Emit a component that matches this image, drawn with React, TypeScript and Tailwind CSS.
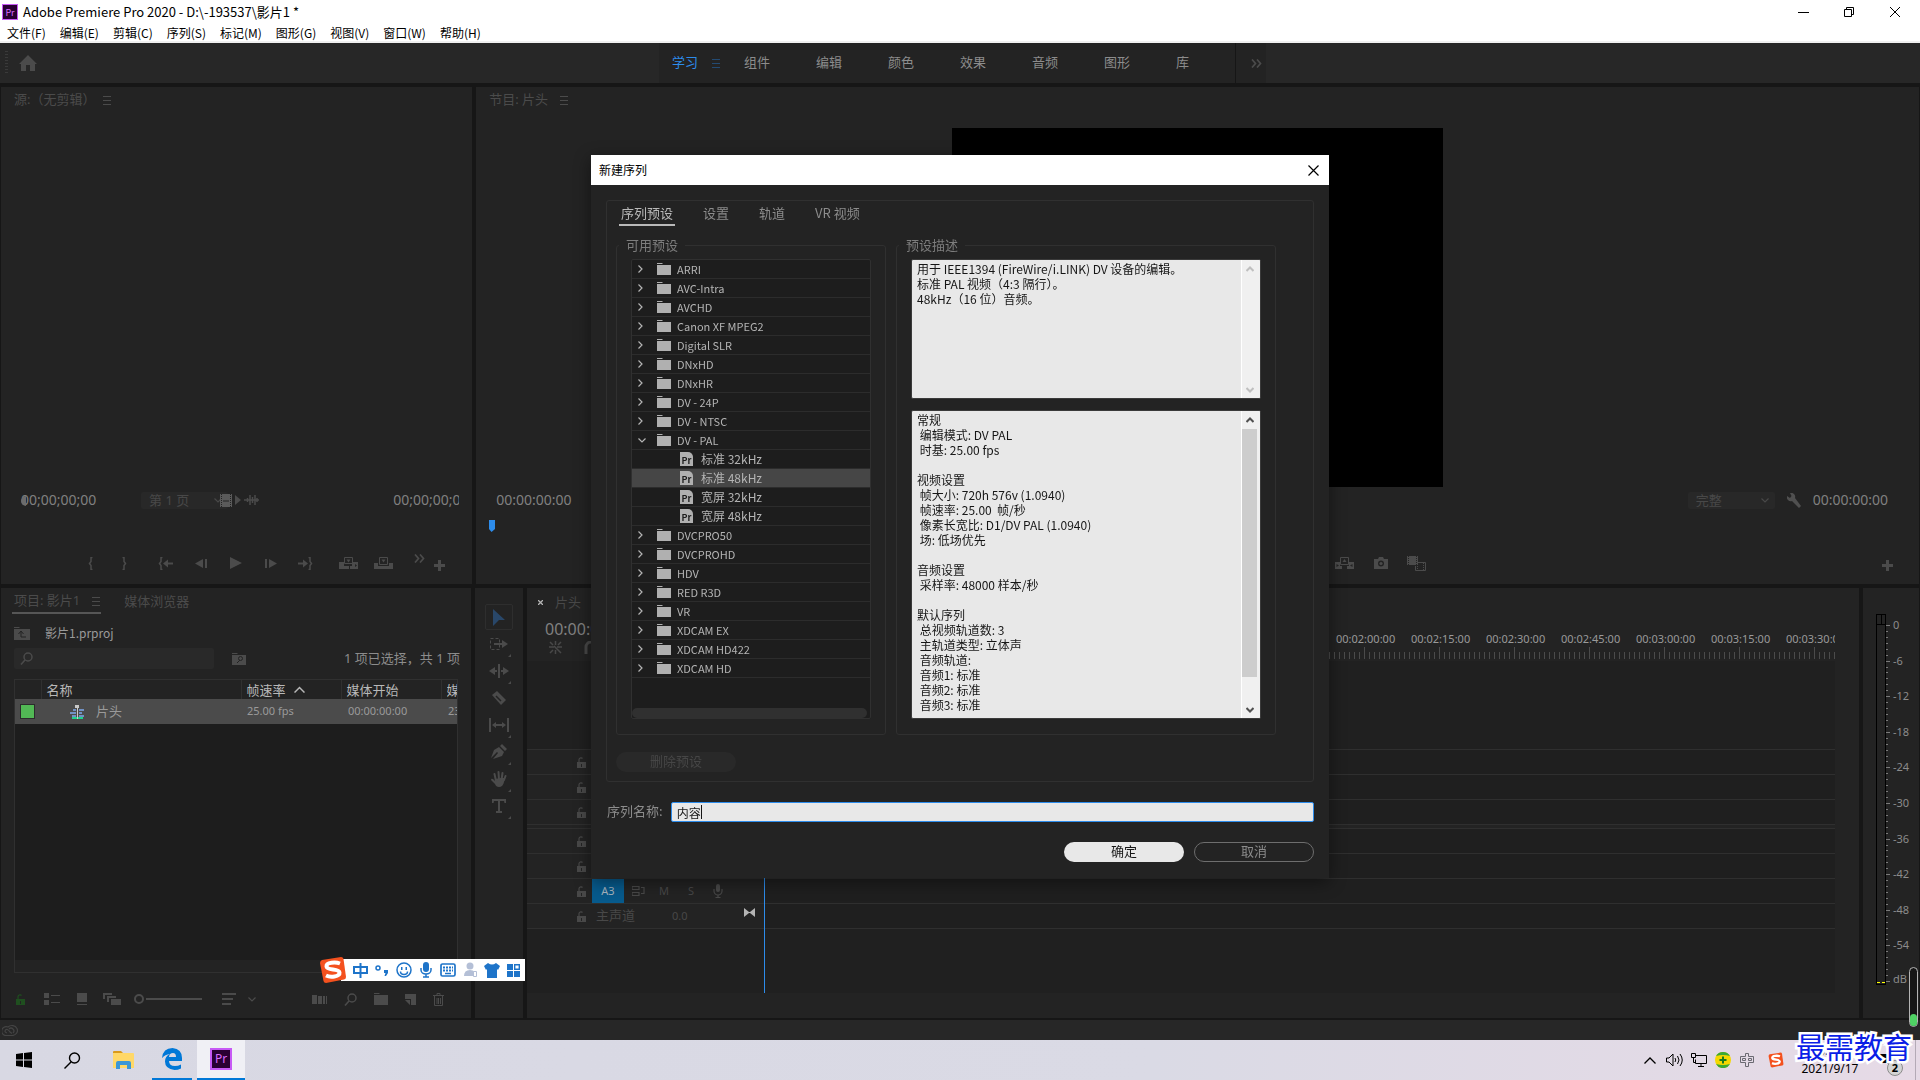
import { useState } from 'react'
import type { ReactNode } from 'react'
import clsx from 'clsx'

const menus = ['文件(F)', '编辑(E)', '剪辑(C)', '序列(S)', '标记(M)', '图形(G)', '视图(V)', '窗口(W)', '帮助(H)']
const workspaces = ['组件', '编辑', '颜色', '效果', '音频', '图形', '库']

type Preset = { name: string; open?: boolean; children?: string[] }

const presets: Preset[] = [
  { name: 'ARRI' },
  { name: 'AVC-Intra' },
  { name: 'AVCHD' },
  { name: 'Canon XF MPEG2' },
  { name: 'Digital SLR' },
  { name: 'DNxHD' },
  { name: 'DNxHR' },
  { name: 'DV - 24P' },
  { name: 'DV - NTSC' },
  { name: 'DV - PAL', open: true, children: ['标准 32kHz', '标准 48kHz', '宽屏 32kHz', '宽屏 48kHz'] },
  { name: 'DVCPRO50' },
  { name: 'DVCPROHD' },
  { name: 'HDV' },
  { name: 'RED R3D' },
  { name: 'VR' },
  { name: 'XDCAM EX' },
  { name: 'XDCAM HD422' },
  { name: 'XDCAM HD' },
]

const description = `用于 IEEE1394 (FireWire/i.LINK) DV 设备的编辑。
标准 PAL 视频（4:3 隔行）。
48kHz（16 位）音频。`

const details = `常规
 编辑模式: DV PAL
 时基: 25.00 fps

视频设置
 帧大小: 720h 576v (1.0940)
 帧速率: 25.00  帧/秒
 像素长宽比: D1/DV PAL (1.0940)
 场: 低场优先

音频设置
 采样率: 48000 样本/秒

默认序列
 总视频轨道数: 3
 主轨道类型: 立体声
 音频轨道:
 音频1: 标准
 音频2: 标准
 音频3: 标准`

/* ---------- icons ---------- */

type IconProps = { w?: number; h?: number; className?: string; children: ReactNode }

function Icon({ w = 16, h = 16, className, children }: IconProps) {
  return (
    <svg width={w} height={h} viewBox={`0 0 ${w} ${h}`} fill="currentColor" className={clsx('shrink-0', className)} aria-hidden="true">
      {children}
    </svg>
  )
}

const MenuLines = ({ className }: { className?: string }) => (
  <Icon w={8} h={9} className={className}>
    <path d="M0 0h8v1H0zM0 4h8v1H0zM0 8h8v1H0z" />
  </Icon>
)

const Folder = ({ className }: { className?: string }) => (
  <Icon w={14} h={12} className={className}>
    <path d="M0 0h5l1 1H0zM0 2h14v10H0z" />
  </Icon>
)

const Magnifier = ({ className }: { className?: string }) => (
  <Icon w={13} h={13} className={className}>
    <circle cx="8" cy="5" r="4" fill="none" stroke="currentColor" strokeWidth="1.5" />
    <path d="M5 8L1 12.5" stroke="currentColor" strokeWidth="1.6" />
  </Icon>
)

const Lock = ({ className }: { className?: string }) => (
  <Icon w={9} h={11} className={className}>
    <path fillRule="evenodd" d="M0 5h9v6H0zM4 7v3h1V7z" />
    <path d="M2 5V3a2 2 0 0 1 3.500-1.500" fill="none" stroke="currentColor" strokeWidth="1.200" />
  </Icon>
)

const Chevron = ({ className }: { className?: string }) => (
  <Icon w={8} h={5} className={className}>
    <path d="M.5.5L4 4 7.500.5" fill="none" stroke="currentColor" strokeWidth="1.200" />
  </Icon>
)

const Plus = () => (
  <Icon w={11} h={11}>
    <path d="M4 0h3v4h4v3H7v4H4V7H0V4h4z" />
  </Icon>
)

const Mic = ({ className }: { className?: string }) => (
  <Icon w={10} h={14} className={className}>
    <rect x="3" y="0" width="4" height="8" rx="2" />
    <path d="M1 5v2a4 4 0 0 0 8 0V5M5 11v2M2.500 13.500h5" fill="none" stroke="currentColor" strokeWidth="1.200" />
  </Icon>
)

const InIcon = () => (
  <Icon w={5} h={13}><path d="M4.500.5H3v4L1.500 6.500 3 8.500v4h1.500" fill="none" stroke="currentColor" strokeWidth="1.500" /></Icon>
)
const OutIcon = () => (
  <Icon w={5} h={13}><path d="M.5.5H2v4l1.500 2L2 8.500v4H.5" fill="none" stroke="currentColor" strokeWidth="1.500" /></Icon>
)
const GoInIcon = () => (
  <Icon w={15} h={13}>
    <path d="M4.500.5H3v4L1.500 6.500 3 8.500v4h1.500" fill="none" stroke="currentColor" strokeWidth="1.500" />
    <path d="M5 6.500L10 2.500v3h5v2h-5v3z" />
  </Icon>
)
const GoOutIcon = () => (
  <Icon w={15} h={13}>
    <path d="M10.500.5H12v4l1.500 2-1.500 2v4h-1.500" fill="none" stroke="currentColor" strokeWidth="1.500" />
    <path d="M10 6.500L5 2.500v3H0v2h5v3z" />
  </Icon>
)
const StepBackIcon = () => <Icon w={12} h={9}><path d="M0 4.500L8 0v9zM10 0h2v9h-2z" /></Icon>
const StepForwardIcon = () => <Icon w={12} h={9}><path d="M12 4.500L4 0v9zM0 0h2v9H0z" /></Icon>
const PlayIcon = () => <Icon w={12} h={12}><path d="M0 0l12 6-12 6z" /></Icon>
const InsertIcon = () => (
  <Icon w={19} h={12}>
    <path d="M0 5h5v4h5v3H0zM13 5h6v7h-8V9h2zM16 7v3l2-1.500z" fillRule="evenodd" />
    <path d="M5.500.5h8v6h-8z" fill="none" stroke="currentColor" />
    <path d="M7.500 2.500h4l-2 3z" />
  </Icon>
)
const OverwriteIcon = () => (
  <Icon w={19} h={12}>
    <path d="M0 6h4v3h11V6h4v6H0z" />
    <path d="M5.500.5h8v7h-8z" fill="none" stroke="currentColor" />
    <path d="M7.500 2.500h4l-2 3z" />
  </Icon>
)
const ExtractIcon = () => (
  <Icon w={19} h={12}>
    <path d="M0 5h5v4h2v3H0zM14 5h5v7h-7V9h2zM1.500 7v3L4 8.500zM17.500 7v3L15 8.500z" fillRule="evenodd" />
    <path d="M5.500.5h8v7h-8z" fill="none" stroke="currentColor" />
    <path d="M7.500 5h4l-2-3z" />
  </Icon>
)
const CameraIcon = () => (
  <Icon w={14} h={12}>
    <path fillRule="evenodd" d="M0 2h4l1-2h4l1 2h4v10H0zM7 3.500a3 3 0 1 0 0 6 3 3 0 0 0 0-6z" />
    <circle cx="7" cy="6.500" r="1.600" />
  </Icon>
)
const CompareIcon = () => (
  <Icon w={19} h={15}>
    <path d="M0 0h11v9H0z" />
    <path d="M1.500 0v9M9.500 0v9" stroke="#232323" strokeDasharray="1 1" />
    <path d="M11 6.500h7.500v8h-10V10" fill="none" stroke="currentColor" />
    <path d="M10.500 10v4M16.500 7v7" stroke="currentColor" strokeDasharray="1 1" />
  </Icon>
)
const DoubleChevron = ({ className }: { className?: string }) => (
  <Icon w={11} h={9} className={className}>
    <path d="M1 .5l3.500 4L1 8.500M6 .5l3.500 4L6 8.500" fill="none" stroke="currentColor" strokeWidth="1.700" />
  </Icon>
)

function PrBadge({ size }: { size: 'sm' | 'lg' }) {
  return (
    <span
      className={clsx(
        'flex shrink-0 items-center justify-center border-[#c75af5] bg-[#2a0033] leading-none text-[#d96cff]',
        size === 'sm' ? 'h-4 w-4 border text-[9px]' : 'h-[22px] w-[22px] border-2 text-xs',
      )}
    >
      Pr
    </span>
  )
}

const SogouMark = ({ size, className }: { size: number; className?: string }) => (
  <svg width={size} height={size} viewBox="0 0 28 28" aria-hidden="true" className={clsx('shrink-0', className)}>
    <path d="M3 4L22 1q2 0 2.500 2L27 21q0 2-2 2.500L7 27q-2 0-2.500-2L1 7q0-2 2-3z" fill="#f4511e" />
    <path d="M21 7.500C17 6 7 6 7.500 10.500 8 15 20 12 20.500 16.500 21 21 11 21.500 7 19.500" fill="none" stroke="#fff" strokeWidth="4" />
  </svg>
)

/* ---------- window chrome ---------- */

function TitleBar() {
  return (
    <header className="bg-white font-['Noto_Sans_CJK_SC',sans-serif] text-xs text-black">
      <div className="flex h-6 items-center pl-0.5">
        <PrBadge size="sm" />
        <h1 className="ml-[5px] flex-1 text-[13px]">Adobe Premiere Pro 2020 - D:\-193537\影片1 *</h1>
        <button aria-label="最小化" className="flex h-5 w-[46px] items-center justify-center">
          <span className="h-px w-[11px] bg-black" />
        </button>
        <button aria-label="还原" className="flex h-5 w-[46px] items-center justify-center">
          <Icon w={10} h={10}>
            <path d="M.5 2.500h7v7h-7zM2.500 2.500v-2h7v7h-2" fill="none" stroke="currentColor" />
          </Icon>
        </button>
        <button aria-label="关闭" className="mr-0.5 flex h-5 w-[46px] items-center justify-center">
          <Icon w={10} h={10}>
            <path d="M0 0l10 10M10 0L0 10" stroke="currentColor" />
          </Icon>
        </button>
      </div>
      <nav className="flex h-[19px] items-center gap-[14px] border-b-2 border-[#f0f0f0] pl-[7px] text-xs">
        {menus.map((m) => (
          <button key={m}>{m}</button>
        ))}
      </nav>
    </header>
  )
}

function WorkspaceBar() {
  return (
    <div className="grid h-10 shrink-0 grid-cols-[1fr_auto_1fr] bg-[#272727] pl-[5px] text-[13px] text-[#8c8c8c]">
      <div className="flex items-center text-[#4b4b4b]">
        <span className="h-6 w-[3px] bg-[repeating-linear-gradient(#3a3a3a_0_1px,#272727_1px_3px)]" />
        <button aria-label="主页" className="ml-[11px]">
          <Icon w={18} h={16}>
            <path d="M9 0l9 9h-2v7h-5v-6H7v6H2V9H0z" />
          </Icon>
        </button>
      </div>
      <nav className="flex items-center bg-[#232323] pl-[13px]">
        <button className="text-[#2d8ceb]">学习</button>
        <MenuLines className="ml-[14px] mr-6 text-[#234a72]" />
        <div className="flex gap-[46px]">
          {workspaces.map((w) => (
            <button key={w}>{w}</button>
          ))}
        </div>
        <span className="ml-[46px] h-full w-px bg-[#161616]" />
        <button aria-label="更多工作区" className="pl-[15px] pr-1 text-[#4b4b4b]">
          <DoubleChevron />
        </button>
      </nav>
      <div />
    </div>
  )
}

function Transport({ label, children, className }: { label: string; children: ReactNode; className?: string }) {
  return (
    <button aria-label={label} className={clsx('flex h-6 items-center justify-center', className ?? 'w-[35px]')}>
      {children}
    </button>
  )
}

function DimSelect({ label, value }: { label: string; value: string }) {
  return (
    <div className="relative flex h-[17px] w-[87px] items-center rounded-[2px] bg-[#282828]">
      <select aria-label={label} className="h-full w-full appearance-none bg-transparent pl-2 text-[13px] leading-4 text-[#484848] outline-none">
        <option>{value}</option>
      </select>
      <Chevron className="pointer-events-none absolute right-1.5 text-[#484848]" />
    </div>
  )
}

function SourcePanel() {
  return (
    <section className="flex min-w-0 flex-[471] flex-col bg-[#232323] text-[#4b4b4b]">
      <div className="flex h-[26px] items-center gap-2 pl-[13px] text-[13px]">
        <h2>源:（无剪辑）</h2>
        <MenuLines />
      </div>
      <div className="flex-1" />
      <div className="flex h-6 items-center pl-5 pr-[13px]">
        <span className="relative w-[120px] text-sm text-[#808080]">
          <i className="absolute left-0 top-1.5 h-2.5 w-[5px] rounded-l-full bg-[#6c6c6c]" />
          00;00;00;00
        </span>
        <DimSelect label="页" value="第 1 页" />
        <div className="z-10 -ml-2 flex items-center gap-[3px]">
          <Icon w={12} h={13}>
            <path d="M0 0h12v13H0z" fill="#5a5a5a" />
            <path d="M1.500 0v13M10.500 0v13" stroke="#232323" strokeDasharray="1 1" />
            <path d="M3 7h6" stroke="#232323" />
          </Icon>
          <Icon w={6} h={10}><path d="M0 0l6 5-6 5z" /></Icon>
          <Icon w={15} h={10}>
            <path d="M0 5h15M3.500 3v4M6 0v10M8.500 2v6M11 0v10M13 3v4" stroke="currentColor" strokeWidth="1.500" />
          </Icon>
        </div>
        <span className="ml-auto w-[66px] overflow-hidden whitespace-nowrap text-sm text-[#808080]">00;00;00;00</span>
      </div>
      <div className="mb-[9px] mt-[39px] flex pl-[72px]">
        <Transport label="标记入点"><InIcon /></Transport>
        <Transport label="标记出点" className="mr-2 w-8"><OutIcon /></Transport>
        <Transport label="转到入点"><GoInIcon /></Transport>
        <Transport label="后退一帧"><StepBackIcon /></Transport>
        <Transport label="播放"><PlayIcon /></Transport>
        <Transport label="前进一帧"><StepForwardIcon /></Transport>
        <Transport label="转到出点" className="mr-2 w-[35px]"><GoOutIcon /></Transport>
        <Transport label="插入"><InsertIcon /></Transport>
        <Transport label="覆盖" className="mr-2 w-[35px]"><OverwriteIcon /></Transport>
        <Transport label="更多" className="w-5 pb-2.5"><DoubleChevron /></Transport>
        <Transport label="按钮编辑器" className="w-5 pt-1"><Plus /></Transport>
      </div>
    </section>
  )
}

function ProgramPanel() {
  return (
    <section className="flex min-w-0 flex-[1442] flex-col bg-[#232323] text-[#4b4b4b]">
      <div className="flex h-[26px] items-center gap-3 pl-[13px] text-[13px]">
        <h2>节目: 片头</h2>
        <MenuLines />
      </div>
      <div className="flex flex-1 justify-center pb-px pt-[15px]">
        <div className="w-[34%] bg-black" />
      </div>
      <div className="flex h-6 items-center pl-5 pr-[31px] text-sm text-[#808080]">
        <span>00:00:00:00</span>
        <div className="ml-auto flex items-center gap-3">
          <DimSelect label="回放分辨率" value="完整" />
          <Icon w={14} h={15} className="text-[#505050]">
            <path d="M3 0a4 4 0 0 1 5 5l6 8-2 2-7-7A4 4 0 0 1 0 3l3 2 1.500-2z" />
          </Icon>
          <span>00:00:00:00</span>
        </div>
      </div>
      <div className="h-[39px] pl-[13px] pt-2">
        <Icon w={6} h={12} className="text-[#2d8ceb]"><path d="M0 0h6v9l-3.500 3L0 9z" /></Icon>
      </div>
      <div className="mb-[9px] grid grid-cols-[1fr_auto_1fr] pl-1.5">
        <div />
        <div className="flex gap-px">
          <Transport label="添加标记"><InIcon /></Transport>
          <Transport label="标记入点"><InIcon /></Transport>
          <Transport label="标记出点"><OutIcon /></Transport>
          <Transport label="转到入点"><GoInIcon /></Transport>
          <Transport label="后退一帧"><StepBackIcon /></Transport>
          <Transport label="播放"><PlayIcon /></Transport>
          <Transport label="前进一帧"><StepForwardIcon /></Transport>
          <Transport label="转到出点"><GoOutIcon /></Transport>
          <Transport label="插入"><InsertIcon /></Transport>
          <Transport label="提升"><OverwriteIcon /></Transport>
          <Transport label="提取"><ExtractIcon /></Transport>
          <Transport label="导出帧"><CameraIcon /></Transport>
          <Transport label="比较视图"><CompareIcon /></Transport>
        </div>
        <Transport label="按钮编辑器" className="mr-[22px] w-5 justify-self-end pt-1"><Plus /></Transport>
      </div>
    </section>
  )
}

function ProjectPanel() {
  return (
    <section className="flex min-w-0 flex-[470] flex-col bg-[#232323] text-[#4b4b4b]">
      <div className="flex pl-[11px] text-[13px]">
        <button className="flex h-[26px] items-center gap-3 border-b-2 border-[#565656] pl-0.5 pr-px pt-0.5">
          项目: 影片1 <MenuLines />
        </button>
        <button className="ml-[23px] h-[26px] pt-0.5">媒体浏览器</button>
      </div>
      <div className="mt-[7px] flex h-6 items-center pl-[13px] text-xs text-[#9a9a9a]">
        <Icon w={16} h={13} className="text-[#4b4b4b]">
          <path d="M0 0h5l1 1H0zM0 2h16v11H0z" />
          <path d="M7 5v5h5M4.500 7L7 4l2.500 3" fill="none" stroke="#232323" />
        </Icon>
        <span className="ml-[15px] font-['Noto_Sans_CJK_SC',sans-serif]">影片1.prproj</span>
      </div>
      <div className="mt-[3px] flex items-center pl-[13px] pr-[11px]">
        <div className="flex h-[21px] w-[200px] items-center rounded-[2px] bg-[#292929] pl-1.5">
          <Magnifier />
          <input aria-label="搜索" className="min-w-0 flex-1 bg-transparent outline-none" />
        </div>
        <button aria-label="新建搜索素材箱" className="ml-[18px]">
          <Icon w={14} h={12}>
            <path d="M0 0h5l1 1H0zM0 2h14v10H0z" />
            <path d="M5 10l3-3" stroke="#232323" />
            <circle cx="8.500" cy="5.500" r="2" fill="none" stroke="#232323" />
          </Icon>
        </button>
        <span className="ml-auto text-[13px] text-[#8c8c8c]">1 项已选择，共 1 项</span>
      </div>
      <div className="ml-[13px] mr-[13px] mt-[10px] flex flex-1 flex-col overflow-hidden border border-[#303030]">
        <div className="flex-1 bg-[#1d1d1d]">
          <table className="w-full table-fixed border-collapse text-left text-[11px]">
            <colgroup>
              <col className="w-[26px]" />
              <col className="w-[200px]" />
              <col className="w-[100px]" />
              <col className="w-[100px]" />
              <col />
            </colgroup>
            <thead>
              <tr className="h-[19px] bg-[#232323] text-[13px] leading-[18px] text-[#b8b8b8]">
                <th />
                <th className="border-l border-[#303030] pl-[5px] font-normal">名称</th>
                <th className="border-l border-[#303030] pl-[5px] font-normal">
                  <span className="flex items-center gap-2">
                    帧速率
                    <Icon w={11} h={7}><path d="M.5 6.500l5-5 5 5" fill="none" stroke="currentColor" strokeWidth="1.500" /></Icon>
                  </span>
                </th>
                <th className="border-l border-[#303030] pl-[5px] font-normal">媒体开始</th>
                <th className="overflow-hidden border-l border-[#303030] pl-[5px] font-normal">
                  <span className="block w-3 overflow-hidden">媒</span>
                </th>
              </tr>
            </thead>
            <tbody>
              <tr className="h-[25px] bg-[#4b4b4b] text-[#9a9a9a]">
                <td className="pl-[5px]">
                  <span className="block h-[15px] w-[15px] border border-[#2c2c2c] bg-[#52b855]" />
                </td>
                <td>
                  <span className="flex items-center gap-3 pl-[29px] text-[13px]">
                    <Icon w={14} h={14}>
                      <path d="M3 4h3v2H3zM9 4h5v2H9zM0 7h6v2H0zM9 7h3v2H9zM2 10h4v2H2zM9 10h5v2H9z" fill="#7191c4" />
                      <path d="M2 12h11v2H2z" fill="#1fd18c" />
                      <path d="M5 0h4v3H8v11H7V3H5z" fill="#c8c8c8" />
                    </Icon>
                    片头
                  </span>
                </td>
                <td className="pl-1.5">25.00 fps</td>
                <td className="pl-[7px]">00:00:00:00</td>
                <td className="overflow-hidden whitespace-nowrap pl-[7px]">23:5</td>
              </tr>
            </tbody>
          </table>
        </div>
        <div className="h-3" />
      </div>
      <div className="mb-[7px] mt-[14px] flex h-6 items-center pl-[15px] pr-[27px]">
        <Lock className="text-[#1f4f1f]" />
        <Icon w={16} h={12} className="ml-[19px]">
          <path d="M0 0h5v5H0zM0 7h5v5H0zM7 2h9v1H7zM7 9h9v1H7z" />
        </Icon>
        <Icon w={10} h={12} className="ml-[17px]"><path d="M0 0h10v9H0zM0 11h10v1H0z" /></Icon>
        <Icon w={18} h={12} className="ml-4">
          <path d="M0 0h9v2H2v4H0zM4 3h9v2H6v4H4zM8 6h10v6H8z" />
        </Icon>
        <label className="ml-[13px] flex items-center">
          <span className="sr-only">缩放</span>
          <input
            type="range"
            defaultValue={0}
            className="h-3 w-[68px] appearance-none bg-[linear-gradient(#4b4b4b,#4b4b4b)] bg-[length:56px_2px] bg-right bg-no-repeat [&::-webkit-slider-thumb]:h-2.5 [&::-webkit-slider-thumb]:w-2.5 [&::-webkit-slider-thumb]:appearance-none [&::-webkit-slider-thumb]:rounded-full [&::-webkit-slider-thumb]:border-2 [&::-webkit-slider-thumb]:border-[#4b4b4b] [&::-webkit-slider-thumb]:bg-[#232323]"
          />
        </label>
        <Icon w={14} h={12} className="ml-5"><path d="M0 0h14v2H0zM0 5h11v2H0zM0 10h9v2H0z" /></Icon>
        <Chevron className="ml-3" />
        <div className="ml-auto flex items-center gap-[17px]">
          <Icon w={15} h={9}><path d="M0 0h5v9H0zM6 1h4v8H6zM11 1h2v8h-2zM14 1h1v8h-1z" /></Icon>
          <Magnifier />
          <Folder />
          <Icon w={11} h={11}><path d="M0 0h11v11H6V5H0zM0 6h5v5z" /></Icon>
          <Icon w={11} h={13}>
            <path d="M0 2.500h11M4 2V.5h3V2M1.500 3v9.500h8V3M4 5v6M5.500 5v6M7.500 5v6" fill="none" stroke="currentColor" />
          </Icon>
        </div>
      </div>
    </section>
  )
}

function ToolsPanel() {
  const tools: { name: string; more: boolean; icon: ReactNode }[] = [
    {
      name: '向前选择轨道',
      more: true,
      icon: (
        <Icon w={18} h={12}>
          <path d="M.5.5h9v11h-9z" fill="none" stroke="currentColor" strokeDasharray="3 2" />
          <path d="M4 5h8V2l6 4-6 4V7H4z" />
        </Icon>
      ),
    },
    { name: '波纹编辑', more: true, icon: <Icon w={20} h={14}><path d="M9 0h2v14H9zM0 7l6-4v3h2v2H6v3zM20 7l-6-4v3h-2v2h2v3z" /></Icon> },
    {
      name: '剃刀',
      more: false,
      icon: (
        <Icon w={16} h={16}>
          <path d="M1 5l5-4 9 9-5 5z" />
          <path d="M5 6l5 5" stroke="#232323" strokeWidth="1.500" />
        </Icon>
      ),
    },
    { name: '外滑', more: true, icon: <Icon w={20} h={14}><path d="M0 0h2v14H0zM18 0h2v14h-2zM3 7l4-3v2h6V4l4 3-4 3V8H7v2z" /></Icon> },
    { name: '钢笔', more: true, icon: <Icon w={16} h={16}><path d="M11 0l5 5-2 2-5-5zM8 3l5 5-2 4-9 3 5-6-1-1-6 6 3-8z" /></Icon> },
    {
      name: '手形',
      more: true,
      icon: (
        <Icon w={16} h={16}>
          <path d="M4 8l6-1 4 0-1 4q-1 5-5 5-3 0-4-3L0 9q0-2 2-1l2 2z" />
          <path d="M5 10L3.500 3M8 9L7.500 1M10.500 9l1-7M13 9l1.500-4" stroke="currentColor" strokeWidth="2" strokeLinecap="round" />
        </Icon>
      ),
    },
    { name: '文字', more: true, icon: <Icon w={14} h={14}><path d="M0 0h14v4h-1.500L12 2H8v10h2v2H4v-2h2V2H2l-.5 2H0z" /></Icon> },
  ]
  return (
    <aside className="flex w-12 shrink-0 flex-col items-center bg-[#232323] pt-4 text-[#4b4b4b]">
      <button aria-label="选择" className="flex h-[26px] w-7 items-center justify-center rounded-[2px] border border-[#2e2e2e] text-[#294769]">
        <Icon w={12} h={17}><path d="M0 0l12 11H6l-6 6z" /></Icon>
      </button>
      {tools.map((t) => (
        <button key={t.name} aria-label={t.name} className="relative flex h-[27px] w-7 items-center justify-center">
          {t.icon}
          {t.more && (
            <Icon w={3} h={3} className="absolute bottom-0 right-0.5"><path d="M3 0v3H0z" /></Icon>
          )}
        </button>
      ))}
    </aside>
  )
}

function TrackRow({ name, master }: { name?: string; master?: boolean }) {
  return (
    <div className="flex h-[25px] border-t border-[#2f2f2f]">
      <div className="flex w-[237px] shrink-0 items-center bg-[#232323] pl-[50px]">
        <Lock />
        {name && (
          <>
            <button className="ml-[6px] h-full w-8 bg-[#075a8c] text-[11px] text-[#a8b4be]">{name}</button>
            <Icon w={13} h={10} className="ml-2">
              <path d="M0 .5h7v3H0zM0 6.500h7v3H0zM9 1.500h3v6H9" fill="none" stroke="currentColor" strokeWidth="1.200" />
            </Icon>
            <button className="ml-3 w-[14px] text-[11px]">M</button>
            <button className="ml-[13px] w-[14px] text-[11px]">S</button>
            <Mic className="ml-[15px]" />
          </>
        )}
        {master && (
          <>
            <span className="ml-[10px] text-[13px]">主声道</span>
            <span className="ml-[37px] text-[11px]">0.0</span>
            <Icon w={11} h={9} className="mb-2 ml-auto mr-[9px] text-[#b4b4b4]">
              <path d="M0 0l5 4h1l5-4v9L6 5H5L0 9z" />
            </Icon>
          </>
        )}
      </div>
      <div className="flex-1 bg-[#1f1f1f]" />
    </div>
  )
}

function rulerLabel(i: number) {
  const seconds = i * 15
  const mm = String(Math.floor(seconds / 60)).padStart(2, '0')
  const ss = String(seconds % 60).padStart(2, '0')
  return `00:${mm}:${ss}:00`
}

function Timeline() {
  return (
    <section className="relative flex min-w-0 flex-[1308] flex-col bg-[#232323] pr-6 text-[#484848]">
      <div className="flex h-[29px] shrink-0 items-center pl-[11px] text-[13px]">
        <button aria-label="关闭序列" className="text-[#b4b4b4]">
          <Icon w={5} h={5}><path d="M0 0l5 5M5 0L0 5" stroke="currentColor" strokeWidth="1.300" /></Icon>
        </button>
        <span className="ml-3">片头</span>
      </div>
      <div className="flex h-11 shrink-0">
        <div className="w-[237px] shrink-0 pl-[18px]">
          <div className="text-base leading-6 text-[#808080]">00:00:00:00</div>
          <div className="flex items-center gap-[22px] pl-1">
            <Icon w={13} h={13}>
              <path d="M0 6h5M8 6h5M6.500 0v4M6.500 9v4M1 1l3 3M9 4l3-3M1 12l3-3M5 5l7 7" stroke="currentColor" strokeWidth="1.500" />
            </Icon>
            <Icon w={14} h={13}><path d="M2 13V6a5 5 0 0 1 10 0v7" fill="none" stroke="currentColor" strokeWidth="3" /></Icon>
          </div>
        </div>
        <div className="flex min-w-0 flex-1 overflow-hidden pt-3">
          {Array.from({ length: 15 }, (_, i) => (
            <div key={i} className="w-[75px] shrink-0">
              <div className="-ml-7 h-[18px] text-[11px] leading-5 text-[#9a9a9a]">{rulerLabel(i)}</div>
              <div className="flex h-3 items-end">
                {Array.from({ length: 15 }, (_, t) => (
                  <span key={t} className={clsx('w-[5px] border-l border-[#4b4b4b]', t === 0 ? 'h-3' : 'h-[7px]')} />
                ))}
              </div>
            </div>
          ))}
        </div>
      </div>
      <div className="h-[88px] bg-[#202020]" />
      <TrackRow />
      <TrackRow />
      <TrackRow />
      <div className="h-1 border-t border-[#2f2f2f]" />
      <TrackRow />
      <TrackRow />
      <TrackRow name="A3" />
      <TrackRow master />
      <div className="flex-1 border-t border-[#2f2f2f] bg-[#202020]" />
      <div className="h-[25px]" />
      <div className="absolute bottom-[25px] left-[237px] top-[71px] w-px bg-[#2d8ceb]" />
    </section>
  )
}

function AudioMeter() {
  const labels = ['0', '-6', '-12', '-18', '-24', '-30', '-36', '-42', '-48', '-54']
  return (
    <section className="flex w-14 shrink-0 bg-[#232323] pb-[33px] pl-[13px] pt-[26px] text-[11px] leading-4 text-[#8c8c8c]">
      <div className="flex w-[10px] flex-col border border-black">
        <div className="h-2.5 border-b border-black">
          <div className="mx-auto h-full w-px bg-black" />
        </div>
        <div className="flex-1" />
        <div className="flex h-[2px] justify-between">
          <span className="h-px w-[3px] bg-[#ffff00]" />
          <span className="h-px w-[3px] bg-[#ffff00]" />
        </div>
      </div>
      <div className="flex flex-1 flex-col pt-[11px]">
        {labels.map((l) => (
          <div key={l} className="flex flex-1 gap-[3px]">
            <div className="flex w-[4px] flex-col">
              {[0, 1, 2, 3, 4, 5].map((t) => (
                <span key={t} className={clsx('flex-1 border-t border-[#7a7a7a]', t === 0 ? 'w-[4px]' : 'w-[2px]')} />
              ))}
            </div>
            <span className="-mt-2">{l}</span>
          </div>
        ))}
        <div className="flex h-1 gap-[3px]">
          <span className="w-[4px] border-t border-[#7a7a7a]" />
          <span className="-mt-2.5">dB</span>
        </div>
      </div>
    </section>
  )
}

/* ---------- new sequence dialog ---------- */

function PresetTree() {
  const [selected, setSelected] = useState('标准 48kHz')
  return (
    <div className="flex h-[460px] flex-col overflow-hidden rounded-[2px] border border-[#303030] bg-[#1d1d1d]">
      <ul className="flex-1 text-[11px] text-[#b4b4b4]">
        {presets.map((p) => (
          <li key={p.name}>
            <button className="flex h-[19px] w-full items-center border-b border-[#2c2c2c] pl-1.5">
              <span className="flex w-[19px]">
                {p.open ? (
                  <Chevron />
                ) : (
                  <Icon w={5} h={8}><path d="M.5.5L4 4 .5 7.500" fill="none" stroke="currentColor" strokeWidth="1.200" /></Icon>
                )}
              </span>
              <Folder className="text-[#b0b0b0]" />
              <span className="ml-1.5">{p.name}</span>
            </button>
            {p.children?.map((c) => (
              <button
                key={c}
                onClick={() => setSelected(c)}
                className={clsx('flex h-[19px] w-full items-center border-b border-[#2c2c2c] pl-12 text-xs', selected === c && 'bg-[#464646]')}
              >
                <span className="flex h-3.5 w-[13px] items-end justify-center rounded-tr-[5px] bg-[#b0b0b0] text-[9px] font-bold leading-[11px] text-[#1d1d1d]">Pr</span>
                <span className="ml-2">{c}</span>
              </button>
            ))}
          </li>
        ))}
      </ul>
      <div className="mr-[3px] h-[10px] rounded-full bg-[#303030]" />
    </div>
  )
}

function InfoBox({ label, text, scrollable }: { label: string; text: string; scrollable?: boolean }) {
  return (
    <div className={clsx('flex overflow-hidden rounded-[2px] border border-[#3a3a3a] bg-[#e8e8e8]', scrollable ? 'h-[309px]' : 'h-[140px]')}>
      <textarea
        readOnly
        aria-label={label}
        defaultValue={text}
        className="min-w-0 flex-1 resize-none overflow-hidden bg-transparent pl-[5px] pt-px text-xs leading-[15px] text-[#161616] outline-none"
      />
      <div className={clsx('flex w-[19px] flex-col items-center border-l border-white bg-[#f0f0f0]', scrollable ? 'text-[#505050]' : 'text-[#bfbfbf]')}>
        <span className="flex h-[18px] items-center pr-[3px]">
          <Icon w={8} h={6}><path d="M.5 5L4 1.500 7.500 5" fill="none" stroke="currentColor" strokeWidth="2" /></Icon>
        </span>
        <div className="flex w-full flex-1 flex-col">
          {scrollable && <div className="h-[91%] w-[15px] bg-[#cdcdcd]" />}
        </div>
        <span className="flex h-4 items-center pr-[3px]">
          <Icon w={8} h={6}><path d="M.5 1L4 4.500 7.500 1" fill="none" stroke="currentColor" strokeWidth="2" /></Icon>
        </span>
      </div>
    </div>
  )
}

function NewSequenceDialog() {
  const [name, setName] = useState('内容')
  return (
    <div className="pointer-events-none fixed inset-0 z-20 flex items-start justify-center pt-[155px]">
      <div
        role="dialog"
        aria-label="新建序列"
        className="pointer-events-auto w-[738px] bg-[#232323] font-['Noto_Sans_CJK_SC',sans-serif] shadow-[0_4px_16px_rgba(0,0,0,0.45)]"
      >
        <div className="flex h-[30px] items-center justify-between bg-white pl-2 pr-[10px] text-xs text-black">
          <h2>新建序列</h2>
          <button aria-label="关闭">
            <Icon w={11} h={11}><path d="M.5.5l10 10M10.500.5l-10 10" stroke="currentColor" strokeWidth="1.200" /></Icon>
          </button>
        </div>
        <div className="px-[15px] pb-4 pt-[15px]">
          <div className="rounded-[3px] border border-[#303030] px-[9px] pb-[9px]">
            <div className="flex gap-[26px] pl-[3px] text-[13px] text-[#8c8c8c]">
              <button className="h-[25px] border-b-2 border-[#b9b9b9] px-0.5 text-[#b9b9b9]">序列预设</button>
              <button className="h-[25px] px-0.5 pb-0.5">设置</button>
              <button className="h-[25px] px-0.5 pb-0.5">轨道</button>
              <button className="h-[25px] px-0.5 pb-0.5">VR 视频</button>
            </div>
            <div className="mt-[9px] flex gap-[10px]">
              <fieldset className="w-[270px] rounded-[3px] border border-[#303030] px-[14px] pb-[15px]">
                <legend className="-ml-3 px-[7px] text-[13px] leading-5 text-[#7d7d7d]">可用预设</legend>
                <div className="pt-1">
                  <PresetTree />
                </div>
              </fieldset>
              <fieldset className="w-[380px] rounded-[3px] border border-[#303030] px-[14px] pb-[15px]">
                <legend className="-ml-3 px-[7px] text-[13px] leading-5 text-[#7d7d7d]">预设描述</legend>
                <div className="flex flex-col gap-[11px] pt-1">
                  <InfoBox label="预设描述" text={description} />
                  <InfoBox label="预设详情" text={details} scrollable />
                </div>
              </fieldset>
            </div>
            <button disabled className="mt-[17px] flex h-5 w-[120px] items-center justify-center rounded-full bg-[#292929] pb-0.5 text-[13px] text-[#464646]">
              删除预设
            </button>
          </div>
          <div className="mt-5 flex h-5 items-center gap-2 pl-px">
            <label htmlFor="sequence-name" className="pb-0.5 text-[13px] text-[#8c8c8c]">序列名称:</label>
            <div className="relative flex h-5 flex-1">
              <input
                id="sequence-name"
                value={name}
                onChange={(e) => setName(e.target.value)}
                className="h-5 w-full rounded-[2px] border border-[#2d8ceb] bg-[#e8e8e8] pl-[5px] text-xs text-[#161616] outline-none"
              />
              <i className="absolute left-[30px] top-[3px] h-3.5 w-px bg-[#161616]" />
            </div>
          </div>
          <div className="mt-5 flex justify-end gap-[10px] text-[13px] leading-4">
            <button className="h-5 w-[120px] rounded-full bg-[#e8e8e8] pb-0.5 text-[#161616]">确定</button>
            <button className="h-5 w-[120px] rounded-full border border-[#6e6e6e] pb-0.5 text-[#8c8c8c]">取消</button>
          </div>
        </div>
      </div>
    </div>
  )
}

/* ---------- desktop ---------- */

function ImeBar() {
  return (
    <div className="fixed bottom-24 left-[319px] z-30 flex items-center">
      <SogouMark size={28} className="z-10" />
      <div className="-ml-1.5 flex h-[22px] w-[184px] items-center justify-end gap-1.5 bg-white pr-1 text-[#1e74c9]">
        <Icon w={15} h={15}><path d="M1 4h13v6H1zM7.500 0v15" fill="none" stroke="currentColor" strokeWidth="2" /></Icon>
        <Icon w={16} h={16}>
          <circle cx="4" cy="6" r="2" fill="none" stroke="currentColor" strokeWidth="1.500" />
          <path d="M10 8h4v3l-2 3h-1.500l1-3H10z" />
        </Icon>
        <Icon w={16} h={16}>
          <circle cx="8" cy="8" r="7" fill="none" stroke="currentColor" strokeWidth="1.500" />
          <path d="M5 5h1.500v3H5zM9.500 5H11v3H9.500z" />
          <path d="M4.500 9.500a3.500 3 0 0 0 7 0" fill="none" stroke="currentColor" strokeWidth="1.500" />
        </Icon>
        <span className="flex w-4 justify-center">
          <Icon w={12} h={16}>
            <rect x="3" y="0" width="6" height="10" rx="3" />
            <path d="M1 6v2a5 4 0 0 0 10 0V6M6 12v3M3 15h6" fill="none" stroke="currentColor" strokeWidth="1.500" />
          </Icon>
        </span>
        <Icon w={16} h={16}>
          <rect x="1" y="2" width="14" height="12" rx="1.500" fill="none" stroke="currentColor" strokeWidth="1.700" />
          <path d="M3 5.500h10M3 8.500h10" stroke="currentColor" strokeWidth="2" strokeDasharray="2 1" />
          <path d="M5 11.500h6" stroke="currentColor" strokeWidth="1.500" />
        </Icon>
        <Icon w={16} h={16} className="text-[#b4bfd6]">
          <circle cx="8" cy="4" r="3.500" />
          <path d="M2 14q0-6 6-6t6 6z" />
          <path d="M11.500 9.500h3v5h-3z" fill="#fff" stroke="currentColor" />
        </Icon>
        <Icon w={16} h={16}><path d="M4 1q4 3 8 0l4 3-2 4-1-1v9H3V7L2 8 0 4z" /></Icon>
        <Icon w={15} h={15}>
          <path d="M1 1h6v6H1zM1 8h6v6H1zM8 8h6v6H8z" />
          <path d="M8.700 1.700h4.600v4.600H8.700z" fill="none" stroke="currentColor" strokeWidth="1.400" />
        </Icon>
      </div>
    </div>
  )
}

function Taskbar() {
  return (
    <footer className="relative flex h-10 shrink-0 items-center bg-[linear-gradient(90deg,#d8d8e3,#dadae5_60%,#e6dae6)] text-black">
      <button aria-label="开始" className="flex h-full w-12 items-center justify-center">
        <Icon w={16} h={16}><path d="M0 2l7-1v6.500H0zM8 1l8-1v7.500H8zM0 8.500h7V15l-7-1zM8 8.500h8V16l-8-1z" /></Icon>
      </button>
      <button aria-label="搜索" className="flex h-full w-12 items-center justify-center">
        <Icon w={17} h={17}>
          <circle cx="10.500" cy="6" r="5" fill="none" stroke="currentColor" strokeWidth="1.400" />
          <path d="M7 10L.5 16.500" stroke="currentColor" strokeWidth="1.400" />
        </Icon>
      </button>
      <button aria-label="文件资源管理器" className="flex h-full w-[54px] items-center justify-center">
        <Icon w={21} h={18}>
          <path d="M0 1q0-1 1-1h7l2 2H0z" fill="#d99a1c" />
          <path d="M0 2h20q1 0 1 1v14H0z" fill="#ffd868" />
          <path d="M3 18v-6q0-2 2-2h11q2 0 2 2v6h-4v-4H7v4z" fill="#3a97d8" />
        </Icon>
      </button>
      <button aria-label="Edge" className="ml-0.5 flex h-full w-10 items-center justify-center border-b-2 border-[#0078d7] text-[#0078d7]">
        <Icon w={20} h={22}>
          <path d="M0 10Q1 0 10.500 0 20 1 20 10v3H7q0 5 6 5 3 0 6-1.500v4Q16 22 12.500 22 3 21 3 13.500 3 8 8 6 3 6.500 0 10zM7 9h7q0-4-3-4-3.500 0-4 4z" fillRule="evenodd" />
        </Icon>
      </button>
      <button aria-label="Premiere Pro" className="ml-[5px] flex h-full w-12 items-center justify-center border-b-2 border-[#0078d7] bg-[#f0f0f5]">
        <PrBadge size="lg" />
      </button>
      <div className="ml-auto flex h-full items-center">
        <Icon w={12} h={7} className="mr-[10px]"><path d="M.5 6.500L6 1l5.500 5.500" fill="none" stroke="currentColor" strokeWidth="1.300" /></Icon>
        <Icon w={17} h={14} className="mr-2">
          <path d="M.5 5h2.500L7 1v12L3 9H.5zM9 5q1.500 2 0 4M11.500 3q3 4 0 8M14 1q4.500 6 0 12" fill="none" stroke="currentColor" />
        </Icon>
        <Icon w={16} h={14} className="mr-2">
          <path d="M4.500 2.500h11v8h-11v-4M10 10.500v3M7 13.500h6M.5.5h4v4h-4zM2.500 4.500v5h2" fill="none" stroke="currentColor" />
        </Icon>
        <Icon w={16} h={16} className="mr-[9px]">
          <circle cx="8" cy="8" r="8" fill="#f5d800" />
          <path d="M8 0a8 8 0 0 1 7 4Q8 2 1 4a8 8 0 0 1 7-4zM1 12q7 2 14 0a8 8 0 0 1-14 0z" fill="#3aa935" />
          <path d="M7 4.500h2V7h2.500v2H9v2.500H7V9H4.500V7H7z" fill="#177a1c" />
        </Icon>
        <Icon w={14} h={14} className="mr-[14px] text-[#6a6a72]">
          <path d="M.5 3.500h5v-3h3v3h5v6h-5v4h-3v-4h-5zM2.500 5.500h3v2h-3zM8.500 5.500h3v2h-3z" fill="none" stroke="currentColor" />
        </Icon>
        <SogouMark size={16} />
        <div className="ml-4 w-[60px] text-center text-xs leading-[18px]">
          <div>8:40</div>
          <div>2021/9/17</div>
        </div>
        <button aria-label="通知" className="relative ml-[19px] h-5 w-9">
          <Icon w={14} h={12}><path d="M0 0h14v9h-3v3l-3-3H0z" /></Icon>
          <span className="absolute left-2 top-2.5 flex h-4 w-4 items-center justify-center rounded-full border border-[#8a8a8a] bg-[#d4d4d4] text-[11px] font-bold">2</span>
        </button>
        <span className="mr-1 h-full w-px bg-[#b4aab6]" />
      </div>
      <span className="absolute -top-[10px] right-2 whitespace-nowrap text-[29px] leading-9 text-[#0a1ee6] [paint-order:stroke_fill] [-webkit-text-stroke:5px_white]">
        最需教育
      </span>
    </footer>
  )
}

export default function App() {
  return (
    <div className="flex h-screen flex-col overflow-hidden bg-[#161616] font-['Noto_Sans','Noto_Sans_CJK_SC',sans-serif]">
      <TitleBar />
      <WorkspaceBar />
      <main className="mt-1 grid min-h-0 flex-1 grid-cols-1 grid-rows-[497fr_430fr] gap-1 px-px">
        <div className="flex min-h-0 min-w-0 gap-1">
          <SourcePanel />
          <ProgramPanel />
        </div>
        <div className="flex min-h-0 min-w-0 gap-1">
          <ProjectPanel />
          <ToolsPanel />
          <Timeline />
          <AudioMeter />
        </div>
      </main>
      <div className="mt-0.5 flex h-5 shrink-0 items-center bg-[#272727] pl-0.5 text-[#444444]">
        <Icon w={16} h={12}>
          <path d="M5 11.500a4.500 4.500 0 1 1 1-8.500 5.500 5 0 1 1 4 8.500zM5 9q-3-1-1.500-3T8 8l2 1.500M7 5q2-2 4 0t0 4" fill="none" stroke="currentColor" strokeWidth="1.200" />
        </Icon>
      </div>
      <Taskbar />
      <NewSequenceDialog />
      <ImeBar />
      <div className="fixed bottom-[53px] right-[2px] z-30 flex h-[60px] w-[9px] flex-col justify-end rounded-full border border-[#b4b4b4] bg-[#161616]">
        <span className="h-3 rounded-full bg-[#4fd364]" />
      </div>
    </div>
  )
}
